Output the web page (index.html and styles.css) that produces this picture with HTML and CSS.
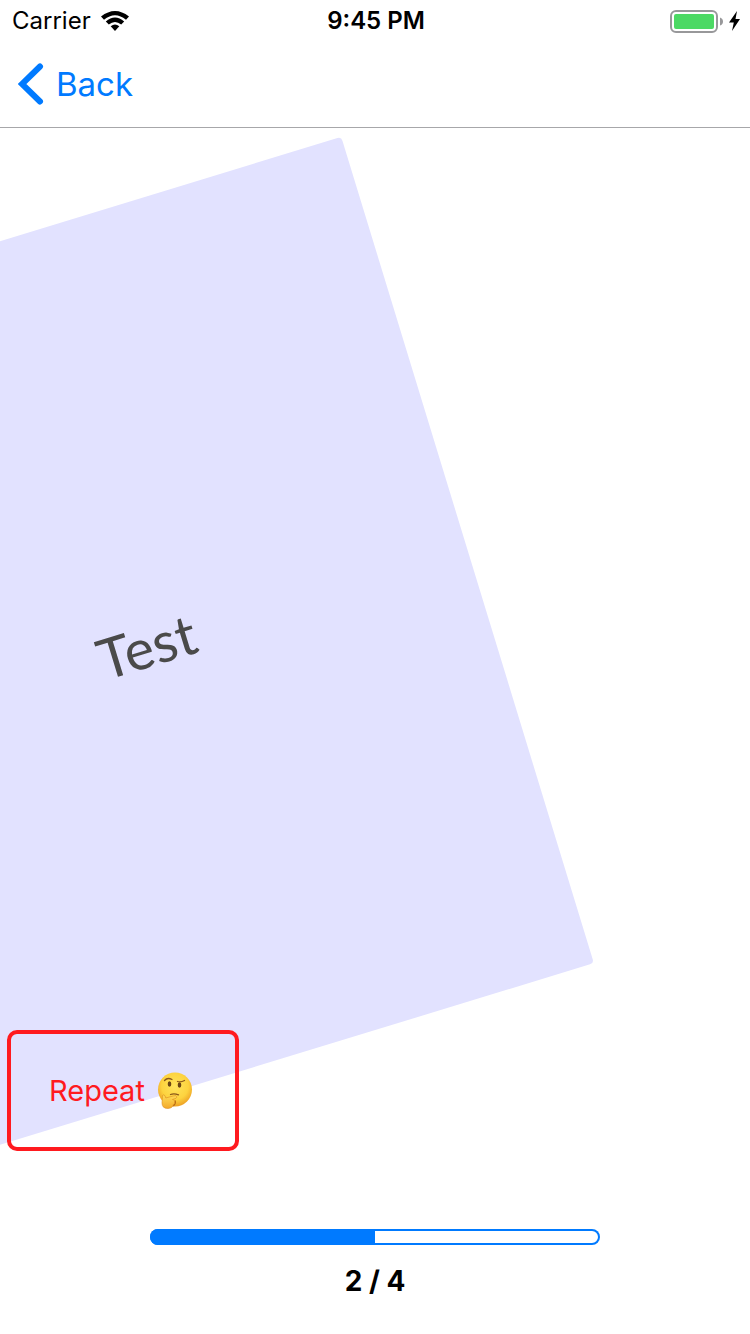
FILE: index.html
```html
<!DOCTYPE html>
<html lang="en">
<head>
<meta charset="utf-8">
<meta name="viewport" content="width=device-width, initial-scale=1">
<title>Flash cards</title>
<link rel="stylesheet" href="styles.css">
</head>
<body>
<div class="screen">
  <div class="status-bar">
    <div class="carrier">
      <span>Carrier</span>
      <svg class="wifi" viewBox="0 0 28 20" aria-hidden="true">
        <path d="M0 5.5Q14-5.500 28 5.500L25 8.800Q14-.2 3 8.800Z"/>
        <path d="M4.800 10.400Q14 2.800 23.200 10.400L20.200 13.500Q14 8.500 7.800 13.500Z"/>
        <path d="M9.700 15.200Q14 12 18.300 15.200L14 20Z"/>
      </svg>
    </div>
    <div class="clock">9:45 PM</div>
    <div class="power">
      <svg class="battery" viewBox="0 0 53 23" aria-hidden="true">
        <rect x="1" y="1" width="46" height="21" rx="5" fill="#fff" stroke="#98989a" stroke-width="2"/>
        <rect x="4" y="4" width="40" height="15" rx="2" fill="#4cd964"/>
        <path d="M50 7.500Q53 8.500 53 11.500T50 15.500Z" fill="#98989a"/>
      </svg>
      <svg class="bolt" viewBox="0 0 11 20" aria-hidden="true"><path d="M8 0L0 11.500H4.800L3 20L11 8H6.500Z"/></svg>
    </div>
  </div>
  <header class="nav">
    <button class="back" type="button">
      <svg class="chevron" viewBox="0 0 26 42" aria-hidden="true"><path d="M22 3.500L4 21L22 38.500"/></svg>
      <span>Back</span>
    </button>
  </header>
  <main class="stage">
    <div class="card">Test</div>
    <button class="repeat" type="button">
      <span>Repeat</span>
      <svg class="thinking" viewBox="0 0 36 37" role="img" aria-label="thinking face">
        <defs>
          <radialGradient id="face" cx=".5" cy=".4" r=".6">
            <stop offset="0" stop-color="#ffe45c"/>
            <stop offset=".65" stop-color="#fdd33f"/>
            <stop offset="1" stop-color="#eda024"/>
          </radialGradient>
          <linearGradient id="hand" x1="0" y1="0" x2="0" y2="1">
            <stop offset="0" stop-color="#ffdd58"/>
            <stop offset="1" stop-color="#f3a92c"/>
          </linearGradient>
        </defs>
        <circle cx="18" cy="17.500" r="17" fill="url(#face)"/>
        <ellipse cx="12.500" cy="12" rx="1.800" ry="2.800" fill="#6b4515"/>
        <ellipse cx="22.500" cy="13" rx="1.800" ry="2.800" fill="#6b4515"/>
        <path d="M7.500 8.500Q10.500 5 15 7.500M20.500 9.500Q24 10.500 27.500 8.500M13.500 22.500Q17 21 21.500 22.800" fill="none" stroke="#8b581a" stroke-width="1.300" stroke-linecap="round"/>
        <path d="M18 28.500Q19 32 16 34" fill="none" stroke="#b86c16" stroke-width="1.500"/>
        <path d="M5.500 23.500Q7.500 21.500 8.800 26L16 24Q20 22.800 20 25Q20 26.500 15.500 27.500Q18.800 28 17.500 30Q18.500 31.500 16.300 32.500Q16 36 11 36.500Q5 36.500 5 31Z" fill="url(#hand)" stroke="#dc8d20" stroke-width=".6"/>
      </svg>
    </button>
  </main>
  <footer class="footer">
    <div class="progress" role="progressbar" aria-label="Cards done" aria-valuemin="0" aria-valuemax="4" aria-valuenow="2">
      <div class="progress-fill" style="width: 50%"></div>
    </div>
    <div class="count">2 / 4</div>
  </footer>
</div>
</body>
</html>
```
FILE: styles.css
```css
* {
  box-sizing: border-box;
}

body {
  margin: 0;
  background: #fff;
  color: #000;
  font-family: Inter, "Liberation Sans", sans-serif;
}

button {
  font: inherit;
  background: none;
  border: 0;
  padding: 0;
  cursor: pointer;
}

svg {
  display: block;
  flex: none;
}

.screen {
  min-height: 100vh;
  display: flex;
  flex-direction: column;
}

.status-bar {
  display: grid;
  grid-template-columns: 1fr auto 1fr;
  align-items: center;
  height: 40px;
  padding: 0 10px 0 12px;
  font-size: 24px;
  line-height: 42px;
}

.carrier {
  display: flex;
  align-items: center;
  gap: 10px;
}

.wifi {
  width: 28px;
  height: 20px;
}

.clock {
  font-weight: 600;
}

.power {
  display: flex;
  align-items: center;
  justify-content: flex-end;
  gap: 6px;
}

.battery {
  width: 53px;
  height: 23px;
}

.bolt {
  width: 11px;
  height: 20px;
}

.nav {
  display: flex;
  align-items: center;
  height: 88px;
  padding: 0 18px;
  border-bottom: 1px solid #a7a7aa;
}

.back {
  display: flex;
  align-items: center;
  gap: 12px;
  color: #007aff;
  font-size: 33px;
  line-height: 42px;
}

.chevron {
  width: 26px;
  height: 42px;
  fill: none;
  stroke: currentColor;
  stroke-width: 6px;
  stroke-linecap: round;
}

.stage {
  position: relative;
  flex: 1;
  display: flex;
  justify-content: center;
  padding: 88px 40px;
  overflow: hidden;
}

.card {
  display: flex;
  align-items: center;
  justify-content: center;
  width: 100%;
  padding-bottom: 6px;
  border-radius: 4px;
  background: #e2e2ff;
  color: #4a4a4a;
  font-family: Lato, "Noto Sans", sans-serif;
  font-size: 56px;
  transform: translateX(-34%) rotate(-17deg);
}

.repeat {
  position: absolute;
  left: 7px;
  bottom: 17px;
  display: flex;
  align-items: center;
  gap: 12px;
  padding: 38px 42px 38px 38px;
  border: 4px solid #ff1a1f;
  border-radius: 10px;
  color: #ff1a1f;
  font-size: 29px;
  line-height: 37px;
}

.thinking {
  width: 36px;
  height: 37px;
}

.footer {
  display: flex;
  flex-direction: column;
  align-items: center;
  gap: 18px;
  padding: 61px 0 35px;
}

.progress {
  width: 60%;
  height: 16px;
  border-radius: 8px;
  box-shadow: inset 0 0 0 2px #007aff;
  overflow: hidden;
}

.progress-fill {
  height: 100%;
  background: #007aff;
}

.count {
  font-size: 28px;
  font-weight: 700;
  line-height: 36px;
}
```
